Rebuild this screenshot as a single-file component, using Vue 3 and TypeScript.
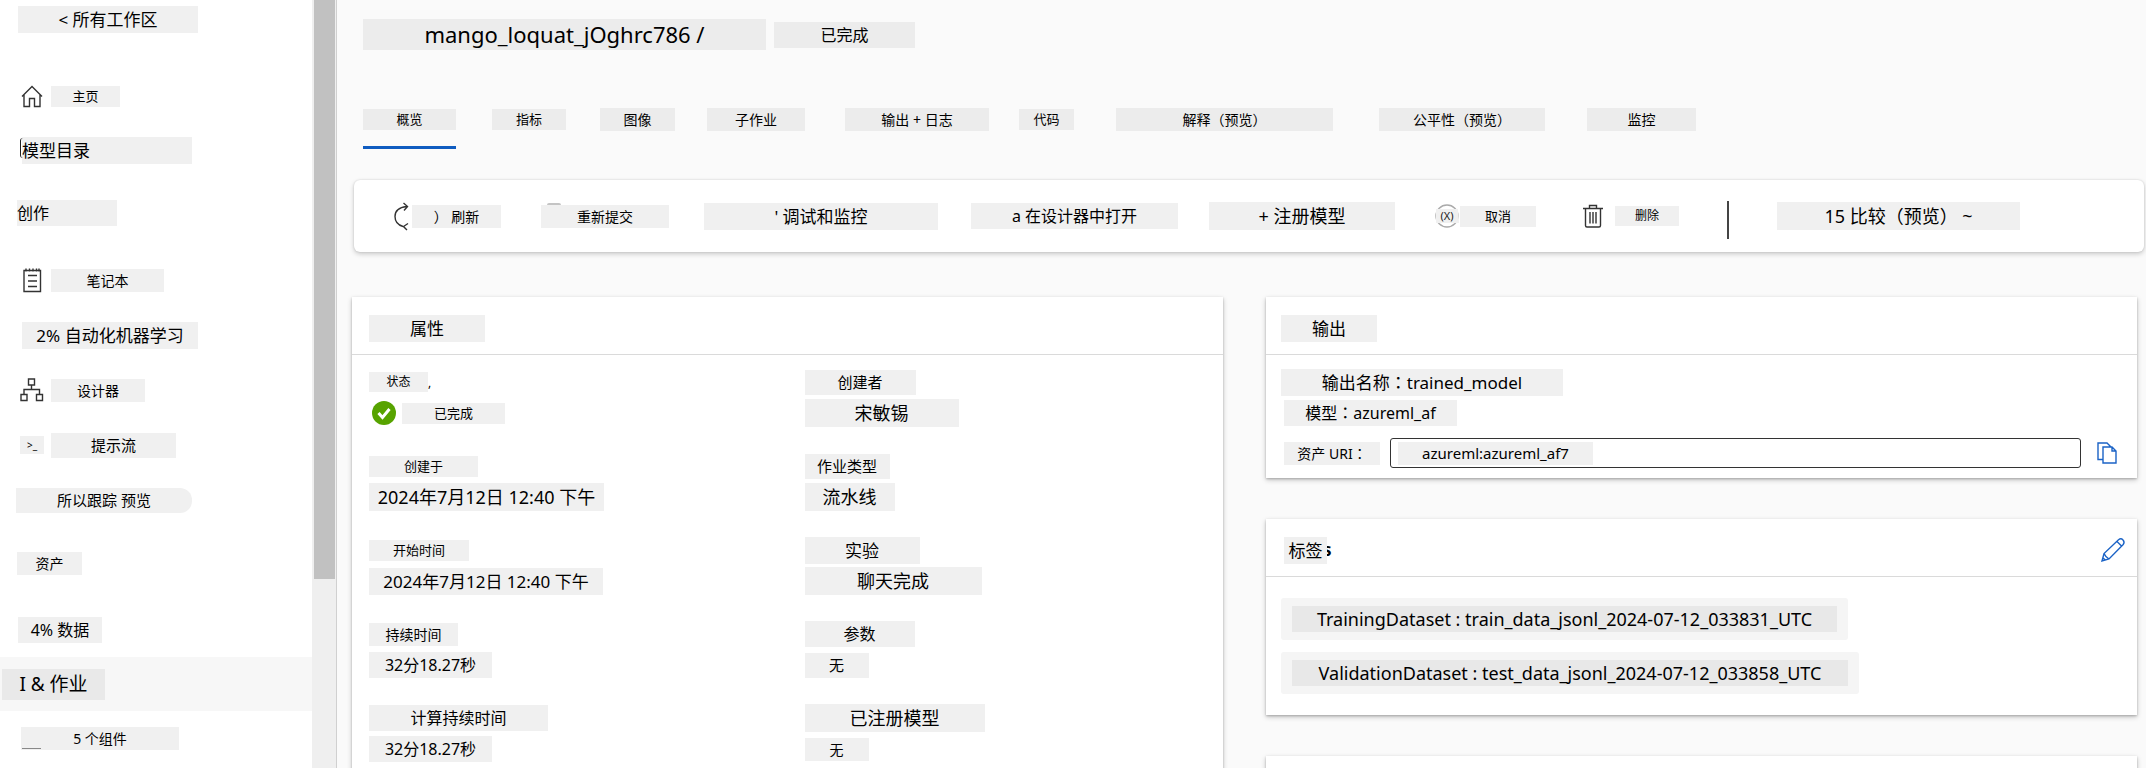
<script setup lang="ts">
interface Chip {
  text: string
  size: number
  width: number
}
interface NavItem extends Chip {
  icon?: 'home' | 'notebook' | 'designer' | 'prompt'
  inset?: number
  kind?: string
}
interface Slot extends Chip {
  space: number
}
interface Action extends Slot {
  icon?: 'refresh' | 'resubmit' | 'cancel' | 'trash'
}
interface Property {
  label: Chip
  value: Chip
  kind?: string
}

const px = (n: number): string => `${n}px`

const topNav: NavItem[] = [
  { text: '主页', size: 13, width: 69, icon: 'home' },
  { text: '模型目录', size: 17, width: 170, inset: 22, kind: 'catalog' },
]
const authoringNav: NavItem[] = [
  { text: '笔记本', size: 14, width: 113, icon: 'notebook' },
  { text: '2% 自动化机器学习', size: 17, width: 176, inset: 22 },
  { text: '设计器', size: 14, width: 94, icon: 'designer' },
  { text: '提示流', size: 15, width: 125, icon: 'prompt' },
  { text: '所以跟踪 预览', size: 15, width: 176, inset: 16, kind: 'rounded' },
]
const assetNav: NavItem[] = [
  { text: '4% 数据', size: 16, width: 84, inset: 18 },
  { text: 'I & 作业', size: 19, width: 103, inset: 2, kind: 'current' },
  { text: '5 个组件', size: 14, width: 158, inset: 21, kind: 'components' },
]
const navGroups = [
  { title: '', items: topNav, size: 14, width: 0, kind: 'top' },
  { title: '创作', items: authoringNav, size: 16, width: 100, kind: 'authoring' },
  { title: '资产', items: assetNav, size: 14, width: 65, kind: 'assets' },
]

const tabs: Slot[] = [
  { text: '概览', size: 13, width: 93, space: 36 },
  { text: '指标', size: 13, width: 74, space: 34 },
  { text: '图像', size: 14, width: 75, space: 32 },
  { text: '子作业', size: 14, width: 98, space: 40 },
  { text: '输出 + 日志', size: 14, width: 144, space: 30 },
  { text: '代码', size: 13, width: 55, space: 42 },
  { text: '解释（预览）', size: 14, width: 217, space: 46 },
  { text: '公平性（预览）', size: 14, width: 166, space: 42 },
  { text: '监控', size: 14, width: 109, space: 0 },
]

const actions: Action[] = [
  { text: '） 刷新', size: 14, width: 89, space: 40, icon: 'refresh' },
  { text: '重新提交', size: 14, width: 128, space: 35, icon: 'resubmit' },
  { text: "' 调试和监控", size: 17, width: 234, space: 33 },
  { text: 'a 在设计器中打开', size: 16, width: 207, space: 31 },
  { text: '+ 注册模型', size: 18, width: 186, space: 40 },
  { text: '取消', size: 13, width: 76, space: 47, icon: 'cancel' },
  { text: '删除', size: 12, width: 64, space: 48, icon: 'trash' },
]

const chip = (text: string, size: number, width: number): Chip => ({ text, size, width })
const properties: Property[] = [
  { label: chip('状态', 12, 59), value: chip('已完成', 13, 103), kind: 'status' },
  { label: chip('创建者', 15, 111), value: chip('宋敏锡', 18, 154) },
  { label: chip('创建于', 13, 109), value: chip('2024年7月12日 12:40 下午', 18, 235) },
  { label: chip('作业类型', 15, 85), value: chip('流水线', 18, 90) },
  { label: chip('开始时间', 13, 100), value: chip('2024年7月12日 12:40 下午', 17, 234) },
  { label: chip('实验', 17, 115), value: chip('聊天完成', 18, 177) },
  { label: chip('持续时间', 14, 89), value: chip('32分18.27秒', 16, 123) },
  { label: chip('参数', 16, 110), value: chip('无', 15, 64) },
  { label: chip('计算持续时间', 16, 179), value: chip('32分18.27秒', 16, 123) },
  { label: chip('已注册模型', 18, 180), value: chip('无', 14, 64) },
]

const tags = [
  { text: 'TrainingDataset : train_data_jsonl_2024-07-12_033831_UTC', width: 545 },
  { text: 'ValidationDataset : test_data_jsonl_2024-07-12_033858_UTC', width: 556 },
]
</script>

<template>
  <div class="shell">
    <nav class="sidebar">
      <a href="#" class="back"><span class="chip s17" :style="{ width: px(180) }">&lt; 所有工作区</span></a>
      <section v-for="group in navGroups" :key="group.kind" class="group" :class="group.kind">
        <h2 v-if="group.title" class="group-title">
          <span class="chip" :class="['s' + group.size, group.kind]" :style="{ width: px(group.width) }">{{ group.title }}</span>
        </h2>
        <a
          v-for="item in group.items"
          :key="item.text"
          href="#"
          class="nav-item"
          :class="item.kind"
          :style="{ paddingLeft: px(item.inset ?? 20) }"
        >
          <svg v-if="item.icon === 'home'" class="icon" viewBox="0 0 24 24">
            <path d="M2 12.5 12 2.5l10 10M4 11v11.5h5.5v-8h5v8H20V11" />
          </svg>
          <svg v-else-if="item.icon === 'notebook'" class="icon" viewBox="0 0 24 24">
            <path d="M4 2.5h16.500v21H4zM6 .5v3M9.500.500v3M13 .5v3M16.500.500v3M19 .5v3M8 7.500h9M8 13h9M8 18.500h9" />
          </svg>
          <svg v-else-if="item.icon === 'designer'" class="icon" viewBox="0 0 24 24">
            <path d="M8.500 1h6v6h-6zM1 16.500h6v6H1zM16.500 16.500h6v6h-6zM11.500 7v4.500M4 16.500v-5h15.500v5" />
          </svg>
          <span v-else-if="item.icon === 'prompt'" class="prompt">&gt;_</span>
          <span class="chip" :class="'s' + item.size" :style="{ width: px(item.width) }">{{ item.text }}</span>
        </a>
      </section>
    </nav>
    <div class="scrollbar"><div class="thumb"></div></div>

    <main class="main">
      <header class="title-row">
        <h1 class="chip title" :style="{ width: px(403) }">mango_loquat_jOghrc786 /</h1>
        <span class="chip s16" :style="{ width: px(141) }">已完成</span>
      </header>

      <div class="tabs" role="tablist">
        <button
          v-for="(tab, i) in tabs"
          :key="tab.text"
          type="button"
          role="tab"
          class="tab"
          :class="{ active: i === 0 }"
          :aria-selected="i === 0"
          :style="{ marginRight: px(tab.space) }"
        >
          <span class="chip" :class="'s' + tab.size" :style="{ width: px(tab.width) }">{{ tab.text }}</span>
        </button>
      </div>

      <div class="toolbar">
        <button
          v-for="action in actions"
          :key="action.text"
          type="button"
          class="action"
          :class="action.icon"
          :style="{ marginRight: px(action.space) }"
        >
          <svg v-if="action.icon === 'refresh'" class="refresh-icon" viewBox="0 0 18 28">
            <path d="M12.500 4.500C4 5.500 1 10 1 14.500s3 8.500 8 10M9.500 1l4 3.500-3.500 4M14 21.500l-4.500 3 3.500 3.500" />
          </svg>
          <svg v-else-if="action.icon === 'cancel'" class="cancel-icon" viewBox="0 0 25 24">
            <circle cx="12" cy="12" r="11" />
            <path d="M1 5h22l1 14H1z" />
            <text x="12" y="16" text-anchor="middle">(X)</text>
          </svg>
          <svg v-else-if="action.icon === 'trash'" class="trash-icon" viewBox="0 0 20 24">
            <path d="M0 4.500h20M6.500 4V1.500h7V4M2.500 5v16.500q0 1.500 1.500 1.500h12q1.500 0 1.500-1.500V5M7 8v11.500M10 8v11.500M13 8v11.500" />
          </svg>
          <span class="chip" :class="'s' + action.size" :style="{ width: px(action.width) }">{{ action.text }}</span>
        </button>
        <span class="divider"></span>
        <button type="button" class="action"><span class="chip s18" :style="{ width: px(243) }">15 比较（预览） ~</span></button>
      </div>

      <div class="content">
        <section class="card">
          <header class="card-head"><h2 class="chip s17" :style="{ width: px(116) }">属性</h2></header>
          <dl class="props">
            <div v-for="(prop, i) in properties" :key="i" class="prop" :class="prop.kind">
              <dt><span class="chip" :class="'s' + prop.label.size" :style="{ width: px(prop.label.width) }">{{ prop.label.text }}</span><span v-if="prop.kind">,</span></dt>
              <dd>
                <svg v-if="prop.kind" class="check" viewBox="0 0 24 24">
                  <circle cx="12" cy="12" r="12" />
                  <path d="m6.500 12 4 4.500 7-8.500" />
                </svg>
                <span class="chip" :class="'s' + prop.value.size" :style="{ width: px(prop.value.width) }">{{ prop.value.text }}</span>
              </dd>
            </div>
          </dl>
        </section>

        <div class="column">
          <section class="card">
            <header class="card-head"><h2 class="chip s17" :style="{ width: px(96) }">输出</h2></header>
            <div class="outputs">
              <p class="line"><span class="chip s17" :style="{ width: px(282) }">输出名称<span class="colon">：</span>trained_model</span></p>
              <p class="line indent"><span class="chip s16" :style="{ width: px(173) }">模型<span class="colon">：</span>azureml_af</span></p>
              <div class="uri indent">
                <label for="asset-uri" class="chip s14" :style="{ width: px(96) }">资产 URI<span class="colon">：</span></label>
                <div class="field"><input id="asset-uri" type="text" value="azureml:azureml_af7" readonly /></div>
                <button type="button" class="icon-button" aria-label="复制">
                  <svg class="copy-icon" viewBox="0 0 20 22">
                    <path d="M6 17.500H1V1h9l4 4M6 5h9l4 4v12H6zM15 5v4h4" />
                  </svg>
                </button>
              </div>
            </div>
          </section>

          <section class="card">
            <header class="card-head tag-head">
              <h2 class="tag-title"><span class="chip s17" :style="{ width: px(43) }">标签</span><span class="tail">s</span></h2>
              <button type="button" class="icon-button" aria-label="编辑">
                <svg class="pencil-icon" viewBox="0 0 24 24">
                  <path d="M1 23l2-7.500L17.500 1.800q2.500-2 4.500.2t.2 4.500L8 21zM16 3.500l4.500 4.500M3 15.500Q4.500 19 8 21M2 20l2.500 2" />
                </svg>
              </button>
            </header>
            <ul class="tags">
              <li v-for="tag in tags" :key="tag.text"><span class="chip" :style="{ width: px(tag.width) }">{{ tag.text }}</span></li>
            </ul>
          </section>

          <section class="card next"></section>
        </div>
      </div>
    </main>
  </div>
</template>

<style>
body {
  margin: 0;
}
</style>

<style scoped>
.shell {
  display: flex;
  height: 100vh;
  overflow: hidden;
  background: #fafafa;
  color: #000;
  font-family: 'Noto Sans', 'Noto Sans CJK SC', sans-serif;
}
.shell * {
  box-sizing: border-box;
}
a {
  color: inherit;
  text-decoration: none;
}
button {
  padding: 0;
  border: 0;
  background: none;
  color: inherit;
  font: inherit;
  cursor: pointer;
}
h1,
h2,
p,
dl,
dd,
ul {
  margin: 0;
  padding: 0;
  font-weight: 400;
}
svg {
  display: block;
  flex: none;
  fill: none;
  stroke: #333;
  stroke-width: 1.400;
  overflow: visible;
}

.chip {
  display: block;
  flex: none;
  background: #f0f0f0;
  text-align: center;
  white-space: nowrap;
}
.s12 { font-size: 12px; line-height: 20px; }
.s13 { font-size: 13px; line-height: 21px; }
.s14 { font-size: 14px; line-height: 23px; }
.s15 { font-size: 15px; line-height: 25px; }
.s16 { font-size: 16px; line-height: 26px; }
.s17 { font-size: 17px; line-height: 27px; }
.s18 { font-size: 18px; line-height: 28px; }
.s19 { font-size: 19px; line-height: 31px; }

.sidebar {
  flex: none;
  width: 312px;
  background: #fff;
}
.back {
  display: flex;
  align-items: center;
  height: 38px;
  padding-left: 18px;
}
.group.top {
  margin-top: 31px;
}
.group {
  display: flex;
  flex-direction: column;
}
.group.authoring {
  gap: 1px;
}
.group-title {
  display: flex;
  align-items: center;
  height: 32px;
  margin: 20px 0 24px;
  padding-left: 17px;
}
.group.authoring .group-title {
  margin-bottom: 23px;
}
.chip.authoring {
  text-align: left;
}
.nav-item {
  position: relative;
  display: flex;
  align-items: center;
  gap: 7px;
  height: 54px;
}
.icon {
  width: 24px;
  height: 24px;
}
.catalog .chip {
  text-align: left;
}
.catalog::before {
  content: '';
  position: absolute;
  left: 20px;
  top: 15px;
  width: 3px;
  height: 20px;
  border-left: 1px solid #222;
  border-radius: 3px 0 0 3px;
}
.prompt {
  width: 24px;
  background: #f0f0f0;
  font-size: 10px;
  line-height: 18px;
  text-align: center;
}
.rounded .chip {
  border-radius: 0 12px 12px 0;
}
.current {
  background: #f7f7f7;
}
.current .chip {
  background: #e9e9e9;
}
.components::after {
  content: '';
  position: absolute;
  left: 22px;
  top: 37px;
  width: 19px;
  height: 1px;
  background: #888;
}

.scrollbar {
  flex: none;
  width: 25px;
  padding: 0 2px;
  border-right: 1px solid #d0d0d0;
  background: #efefef;
}
.thumb {
  width: 21px;
  height: 579px;
  background: #c1c1c1;
}

.main {
  flex: 1;
  display: flex;
  flex-direction: column;
  min-width: 0;
}
.main > * {
  flex: none;
}
.title-row {
  display: flex;
  align-items: center;
  gap: 8px;
  padding: 19px 0 0 26px;
}
.title {
  font-size: 22px;
  line-height: 31px;
}
.title-row .chip,
.tabs .chip {
  background: #ececec;
}
.tabs {
  display: flex;
  height: 42px;
  margin: 57px 0 0 26px;
}
.tab {
  position: relative;
  display: flex;
  align-items: center;
  height: 24px;
}
.tab.active::after {
  content: '';
  position: absolute;
  left: 0;
  bottom: -18px;
  width: 100%;
  height: 3px;
  background: #0f5cc0;
}
.toolbar {
  display: flex;
  align-items: center;
  height: 72px;
  margin: 31px 2px 0 17px;
  padding-left: 40px;
  border-radius: 6px;
  background: #fff;
  box-shadow: 0 2px 5px rgba(0, 0, 0, 0.2), 0 0 2px rgba(0, 0, 0, 0.14);
}
.action {
  position: relative;
  display: flex;
  flex: none;
  align-items: center;
}
.refresh-icon {
  width: 18px;
  height: 28px;
}
.resubmit::before {
  content: '';
  position: absolute;
  left: 6px;
  top: -2px;
  width: 14px;
  height: 2px;
  border-radius: 7px 7px 0 0;
  background: #c4c4c4;
}
.cancel-icon {
  width: 25px;
  height: 24px;
  stroke: #aaa;
}
.cancel-icon path {
  fill: #f0f0f0;
  stroke: none;
}
.cancel-icon text {
  fill: #222;
  stroke: none;
  font-size: 11px;
}
.trash-icon {
  width: 20px;
  height: 24px;
  margin-right: 12px;
}
.divider {
  flex: none;
  width: 2px;
  height: 38px;
  margin: 8px 48px 0 0;
  background: #444;
}

.content {
  display: grid;
  grid-template-columns: minmax(0, 1fr) minmax(0, 1fr);
  gap: 43px;
  margin: 45px 9px 0 15px;
}
.column {
  display: flex;
  flex-direction: column;
  gap: 41px;
}
.card {
  background: #fff;
  box-shadow: 0 2px 5px rgba(0, 0, 0, 0.22), 0 1px 2px rgba(0, 0, 0, 0.2);
}
.card-head {
  display: flex;
  align-items: center;
  height: 58px;
  padding: 5px 0 0 17px;
  border-bottom: 1px solid #dadada;
}
.column .card-head {
  padding-left: 15px;
}
.props {
  display: grid;
  grid-template-columns: 1fr 1fr;
  row-gap: 25px;
  padding: 13px 0 25px;
}
.prop {
  display: grid;
  gap: 3px;
  grid-template-rows: 28px 28px;
  padding-left: 17px;
}
dt,
dd {
  display: flex;
  align-items: center;
}
.status dt {
  font-size: 12px;
}
.status dd {
  gap: 6px;
  padding-left: 3px;
}
.check {
  width: 24px;
  height: 24px;
}
.check circle {
  fill: #57a300;
  stroke: none;
}
.check path {
  stroke: #fff;
  stroke-width: 3;
}

.outputs {
  display: flex;
  flex-direction: column;
  padding: 14px 15px 10px;
}
.line {
  display: flex;
}
.indent {
  margin-left: 3px;
}
.line.indent {
  margin-top: 4px;
}
.colon {
  font-family: 'Noto Sans CJK TC', sans-serif;
  line-height: 1;
}
.uri {
  display: flex;
  align-items: center;
  margin-top: 12px;
}
.field {
  flex: 1;
  display: flex;
  align-items: center;
  height: 30px;
  margin: 0 16px 0 10px;
  padding-left: 7px;
  border: 1px solid #333;
  border-radius: 3px;
}
.field input {
  width: 195px;
  height: 23px;
  padding: 0;
  border: 0;
  outline: 0;
  background: #f0f0f0;
  color: inherit;
  font-family: inherit;
  font-size: 15px;
  text-align: center;
}
.icon-button svg {
  stroke: #1b63c6;
}
.copy-icon {
  width: 20px;
  height: 22px;
}
.uri .icon-button {
  margin-right: 5px;
}
.tag-head {
  justify-content: space-between;
  padding-right: 12px;
}
.tag-title {
  position: relative;
  display: flex;
  align-items: center;
  margin-left: 3px;
}
.tag-title .chip {
  z-index: 1;
}
.tail {
  margin-left: -4px;
  font-size: 17px;
  font-weight: 700;
  line-height: 26px;
}
.pencil-icon {
  width: 24px;
  height: 24px;
}
.tags {
  display: flex;
  flex-direction: column;
  align-items: flex-start;
  gap: 12px;
  padding: 21px 15px;
  list-style: none;
}
.tags li {
  padding: 8px 11px;
  border-radius: 3px;
  background: #f5f5f5;
}
.tags .chip {
  background: #e8e8e8;
  font-size: 18px;
  line-height: 26px;
}
.next {
  height: 120px;
}
</style>
